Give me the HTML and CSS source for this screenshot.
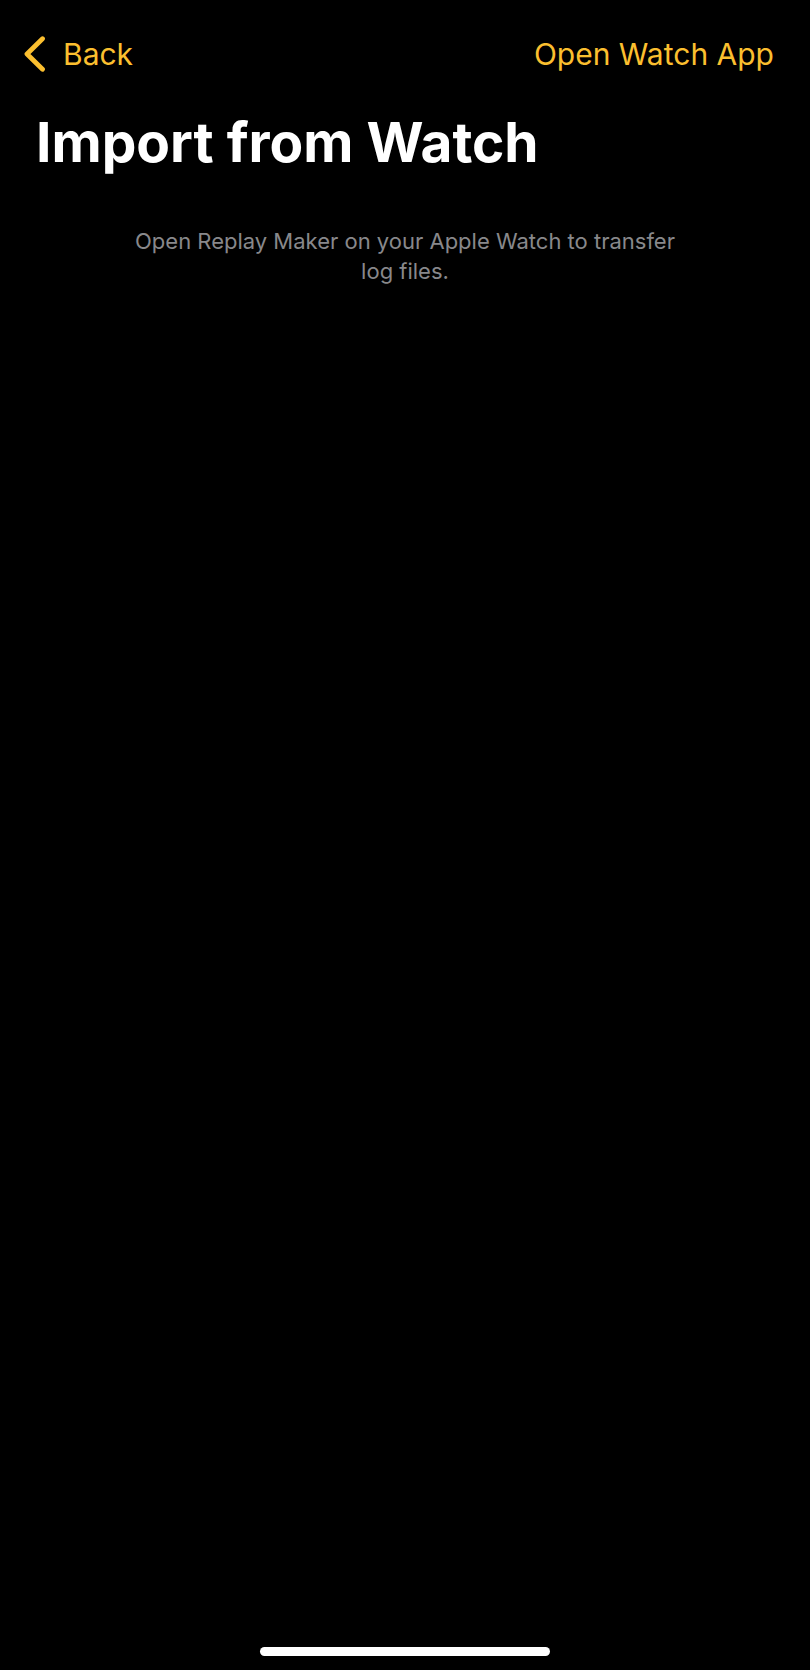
FILE: index.html
```html
<!DOCTYPE html>
<html lang="en">
<head>
    <meta charset="UTF-8">
    <meta name="viewport" content="width=device-width, initial-scale=1.0">
    <title>Import from Watch</title>
    <link rel="stylesheet" href="styles.css">
</head>
<body>
    <header class="nav-bar">
        <button type="button" class="nav-button">
            <svg class="chevron" viewBox="0 0 22 36" aria-hidden="true">
                <path d="M18.5 2.8 L3 18 L18.5 33.2"/>
            </svg>
            Back
        </button>
        <button type="button" class="nav-button">Open Watch App</button>
    </header>

    <main class="content">
        <h1>Import from Watch</h1>
        <p class="hint">Open Replay Maker on your Apple Watch to transfer log files.</p>
    </main>

    <div class="home-indicator"></div>
</body>
</html>
```
FILE: styles.css
```css
* {
    box-sizing: border-box;
}
body {
    margin: 0;
    min-height: 100vh;
    display: flex;
    flex-direction: column;
    background: #000;
    color: #fff;
    font-family: Inter, sans-serif;
}
.nav-bar {
    display: flex;
    justify-content: space-between;
    align-items: center;
    padding: 34px 36px 0 24px;
}
.nav-button {
    display: flex;
    align-items: center;
    gap: 17px;
    padding: 0;
    border: none;
    background: none;
    color: #fbbf2f;
    font-family: inherit;
    font-size: 30px;
    line-height: 40px;
    cursor: pointer;
}
.chevron {
    width: 22px;
    height: 36px;
    fill: none;
    stroke: currentColor;
    stroke-width: 4.8;
    stroke-linecap: round;
    stroke-linejoin: round;
}
.content {
    flex: 1;
    padding: 32px 36px;
}
h1 {
    margin: 0;
    font-size: 55px;
    font-weight: 700;
    line-height: 72px;
}
.hint {
    max-width: 560px;
    margin: 48px auto 0;
    color: #88888b;
    font-size: 22px;
    line-height: 30px;
    text-align: center;
}
.home-indicator {
    width: 36%;
    max-width: 290px;
    height: 9px;
    margin: 0 auto 14px;
    border-radius: 5px;
    background: #fff;
}
```
